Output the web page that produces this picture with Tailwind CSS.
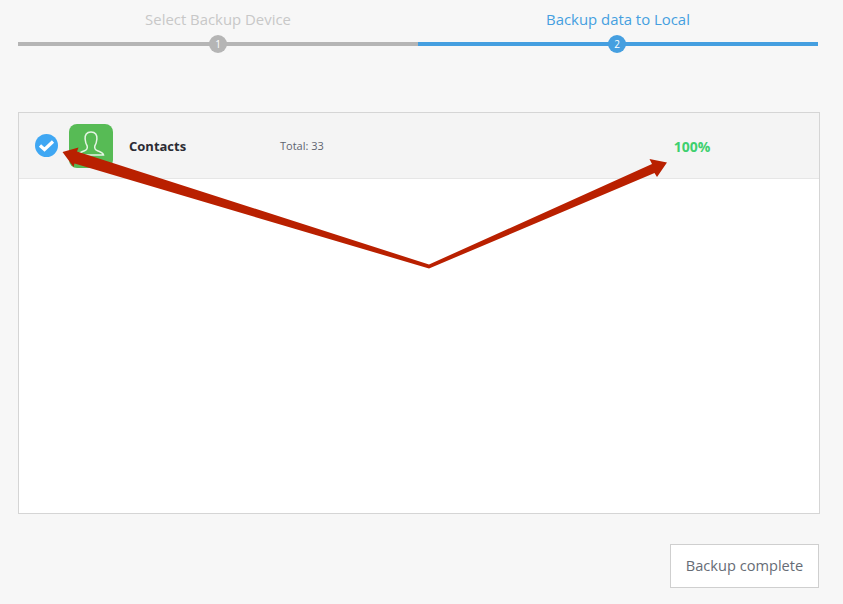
<!DOCTYPE html>
<html lang="en">
<head>
    <meta charset="UTF-8">
    <title>Backup data to Local</title>
    <script src="https://cdn.jsdelivr.net/npm/@tailwindcss/browser@4"></script>
</head>
<body class="relative w-[843px] h-[604px] overflow-hidden bg-[#f7f7f7] font-['Open_Sans','Liberation_Sans',sans-serif]">

    <!-- Steps -->
    <div class="flex w-[800px] ml-[18px] pt-[8px] h-[112px]">
        <div class="w-[400px] flex flex-col items-center">
            <div class="h-[22px] text-[14.900px] leading-[22px] text-[#c8c8c8]">Select Backup Device</div>
            <div class="relative w-full h-[4px] mt-[12px] bg-[#b5b5b5]">
                <div class="absolute left-[191px] top-[-7px] w-[18px] h-[18px] rounded-full bg-[#b5b5b5] text-white text-[10px] leading-[18px] text-center">1</div>
            </div>
        </div>
        <div class="w-[400px] flex flex-col items-center">
            <div class="h-[22px] text-[14.900px] leading-[22px] text-[#459fe0]">Backup data to Local</div>
            <div class="relative w-full h-[4px] mt-[12px] bg-[#459fe0]">
                <div class="absolute left-[190px] top-[-7px] w-[18px] h-[18px] rounded-full bg-[#459fe0] text-white text-[10px] leading-[18px] text-center">2</div>
            </div>
        </div>
    </div>

    <!-- List panel -->
    <div class="w-[802px] h-[402px] ml-[18px] bg-white border border-[#d5d5d5]">
        <div class="flex items-center h-[66px] bg-[#f4f4f4] border-b border-[#e6e6e6]">
            <div class="ml-[16px] w-[23px] h-[23px] rounded-full bg-[#3fa7f3] flex items-center justify-center">
                <svg width="17" height="13" viewBox="0 0 17 13"><path d="M2 6.500 L6.500 10.500 L15 2.500" fill="none" stroke="#fff" stroke-width="3.200"/></svg>
            </div>
            <div class="ml-[11px] w-[44px] h-[44px] rounded-[8px] bg-[#57bb55] flex items-center justify-center">
                <svg width="30" height="36" viewBox="0 0 30 36"><path d="M15 4 C10.500 4 8.800 7 9.100 11 C9.400 14.500 10.200 16.500 11.200 18 C11.700 20.500 11 21.800 8.500 22.800 C5.500 24 3 24.500 2.500 27 L27.500 27 C27 24.500 24.500 24 21.500 22.800 C19 21.800 18.300 20.500 18.800 18 C19.800 16.500 20.600 14.500 20.900 11 C21.200 7 19.500 4 15 4 Z" fill="none" stroke="#e4f4e3" stroke-width="1.500"/></svg>
            </div>
            <div class="ml-[16px] w-[151px] pt-[2px] text-[13px] font-bold text-[#2b2b33]">Contacts</div>
            <div class="pt-[1px] text-[11px] text-[#5f6470]">Total: 33</div>
            <div class="ml-[350px] pt-[1px] text-[14px] font-bold text-[#3ed06f]">100%</div>
        </div>
    </div>

    <!-- Footer -->
    <div class="flex justify-end w-[819px] mt-[30px]">
        <button class="w-[149px] h-[44px] bg-white border border-[#cfcfcf] text-[14.600px] text-[#666c76]">Backup complete</button>
    </div>

    <!-- Annotation arrows -->
    <svg class="absolute left-0 top-0" width="843" height="604" viewBox="0 0 843 604">
        <polygon fill="#b92000" points="62.500,152 78.500,147.500 77,151.500 429,264.500 652,164 649.500,159 667,162.500 657,177 654.500,173 429,268.500 74.500,163.500 73.500,167"/>
    </svg>
</body>
</html>
